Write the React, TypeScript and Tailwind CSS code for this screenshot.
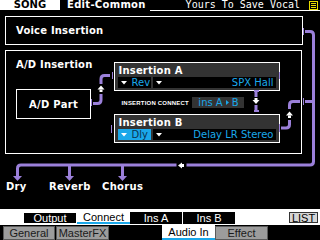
import React from 'react';

const PURPLE = '#9b80da';

const DropArrow = ({ color = '#ffffff' }: { color?: string }) => (
  <svg width="6" height="4" viewBox="0 0 6 4" className="shrink-0">
    <polygon points="0,0 6,0 3,3.5" fill={color} />
  </svg>
);

const InsertionBox = ({
  title,
  type,
  effect,
  selected,
}: {
  title: string;
  type: string;
  effect: string;
  selected?: boolean;
}) => (
  <div className="w-[166px] border border-white bg-[#333333] px-[3px] pt-[2px] pb-[2px]">
    <div className="text-white font-bold text-[10px] leading-[11px] tracking-[0.2px]">{title}</div>
    <div className="flex gap-[2px] mt-[1px] h-[11px]">
      <div
        className={`w-[33px] flex items-center gap-[4px] pl-[3px] text-[10px] leading-[11px] ${
          selected ? 'bg-[#1aa8ea] text-[#0b3350]' : 'bg-black text-[#1aa8ea]'
        }`}
      >
        <DropArrow />
        <span>{type}</span>
      </div>
      <div className="flex-1 flex items-center justify-between pl-[3px] pr-[3px] bg-black text-[#1aa8ea] text-[10px] leading-[11px]">
        <DropArrow />
        <span>{effect}</span>
      </div>
    </div>
  </div>
);

export default function App() {
  return (
    <div className="relative w-[320px] h-[240px] bg-black overflow-hidden font-['DejaVu_Sans',sans-serif] text-white">
      {/* header */}
      <div className="flex h-[11px]">
        <div className="w-[60px] h-[10px] bg-white text-black font-bold text-[10px] leading-[10px] flex items-center justify-center">
          SONG
        </div>
        <div className="w-[90px] pl-[7px] font-bold text-[10px] leading-[10px] tracking-[0.3px]">Edit-Common</div>
        <div className="flex-1 border-b border-white flex items-start justify-end">
          <span className="font-['DejaVu_Sans_Mono',monospace] text-[10px] leading-[10px]">Yours To Save Vocal</span>
          <svg width="9" height="9" viewBox="0 0 9 9" className="ml-[9px] mr-[2px] mt-[1px]">
            <rect x="0.5" y="0.5" width="8" height="8" fill="none" stroke="#e8dc00" />
            <rect x="2" y="2" width="5" height="1" fill="#e8dc00" />
            <rect x="2" y="4" width="5" height="1" fill="#e8dc00" />
            <rect x="2" y="6" width="5" height="1" fill="#e8dc00" />
          </svg>
        </div>
      </div>

      {/* voice insertion */}
      <div className="ml-[5px] mt-[5px] w-[298px] h-[29px] border border-white flex items-center pl-[10px] font-bold text-[10px] tracking-[0.2px]">
        Voice Insertion
      </div>

      {/* A/D insertion */}
      <div className="ml-[5px] mt-[5px] w-[297px] h-[104px] border border-white flex">
        <div className="pl-[10px] pt-[9px]">
          <div className="font-bold text-[10px] leading-[10px] tracking-[0.2px]">A/D Insertion</div>
          <div className="mt-[19px] w-[75px] h-[30px] border border-white flex items-center justify-center font-bold text-[10px] tracking-[0.3px]">
            A/D Part
          </div>
        </div>
        <div className="ml-[22px] pt-[11px]">
          <InsertionBox title="Insertion A" type="Rev" effect="SPX Hall" />
          <div className="flex items-center h-[11px] mt-[6px] mb-[6px]">
            <span className="pl-[7px] w-[78px] shrink-0 whitespace-nowrap font-['Liberation_Sans',sans-serif] font-bold text-[6px] leading-[8px] tracking-[0.2px]">
              INSERTION CONNECT
            </span>
            <div className="w-[52px] h-[11px] bg-[#333333] text-[#1aa8ea] text-[10px] leading-[11px] flex items-center justify-center gap-[3px]">
              <span>ins A</span>
              <svg width="3" height="5" viewBox="0 0 3 5">
                <polygon points="0,0 3,2.5 0,5" fill="#1aa8ea" />
              </svg>
              <span>B</span>
            </div>
          </div>
          <InsertionBox title="Insertion B" type="Dly" effect="Delay LR Stereo" selected />
        </div>
      </div>

      {/* outputs */}
      <div className="flex mt-[27px] h-[12px] font-bold text-[10px] leading-[12px] tracking-[0.3px]">
        <span className="ml-[6px] w-[43px]">Dry</span>
        <span className="w-[53px]">Reverb</span>
        <span>Chorus</span>
      </div>

      {/* tabs row 1 */}
      <div className="mt-[16px] h-[16px] bg-white flex items-start pt-[3px] font-['Liberation_Sans',sans-serif] text-[11px]">
        <div className="ml-[23px] w-[54px] h-[12px] bg-black border border-white text-white flex items-center justify-center leading-[11px]">Output</div>
        <div className="w-[53px] h-[12px] border-b-2 border-[#1aa8ea] text-black flex items-center justify-center leading-[11px]">Connect</div>
        <div className="w-[53px] h-[12px] bg-black border-r border-white text-white flex items-center justify-center leading-[11px]">Ins A</div>
        <div className="w-[52px] h-[12px] bg-black text-white flex items-center justify-center leading-[11px]">Ins B</div>
        <div className="ml-[54px] w-[29px] h-[11px] bg-[#d6d6d6] border border-[#333333] text-black flex items-center justify-center leading-[10px]">LIST</div>
      </div>

      {/* tabs row 2 */}
      <div className="h-[15px] flex items-end font-['Liberation_Sans',sans-serif] text-[11px] leading-[12px]">
        <div className="ml-[3px] w-[52px] h-[14px] bg-[#9c9c9c] border border-[#5a5a5a] text-[#1a1a1a] flex items-center justify-center">General</div>
        <div className="ml-[1px] w-[53px] h-[14px] bg-[#9c9c9c] border border-[#5a5a5a] text-[#1a1a1a] flex items-center justify-center">MasterFX</div>
        <div className="ml-[53px] w-[53px] h-[15px] bg-white border-b-2 border-[#1aa8ea] text-black flex items-center justify-center">Audio In</div>
        <div className="w-[53px] h-[14px] bg-[#9c9c9c] border border-[#5a5a5a] text-[#1a1a1a] flex items-center justify-center">Effect</div>
      </div>

      {/* signal flow lines */}
      <svg className="absolute left-0 top-0 pointer-events-none" width="320" height="240" viewBox="0 0 320 240">
        <g stroke={PURPLE} strokeWidth="3" fill="none">
          <path d="M305 31.5 H310 Q313.5 31.5 313.5 35 V161.5 Q313.5 165 310 165 H186.5" />
          <path d="M176.5 165 H21 Q17.5 165 17.5 168.5 V176" />
          <path d="M69.5 165 V176" />
          <path d="M122.5 165 V176" />
          <path d="M305 101.5 H313" />
          <path d="M300 101.5 H293 Q289.5 101.5 289.5 105 V109" />
          <path d="M289.5 120 V124.5 Q289.5 128 286 128 H281" />
          <path d="M93 103.5 H97.5 Q101 103.5 101 100 V94" />
          <path d="M101 84 V79 Q101 75.5 104.5 75.5 H110" />
          <path d="M256 92 V97" />
          <path d="M256 105 V110" />
        </g>
        <g fill={PURPLE}>
          <rect x="303" y="28" width="1" height="7" />
          <rect x="303" y="98" width="1" height="7" />
          <rect x="279" y="72" width="1" height="7" />
          <rect x="279" y="124" width="1" height="8" />
          <rect x="91" y="99" width="1" height="7" />
          <rect x="112" y="72" width="1" height="7" />
          <rect x="111" y="125" width="1" height="8" />
          <rect x="254" y="90" width="5" height="2" />
          <rect x="254" y="110" width="5" height="2" />
          <polygon points="13,176 22,176 17.5,181" />
          <polygon points="65,176 74,176 69.5,181" />
          <polygon points="118,176 127,176 122.5,181" />
        </g>
        <g fill="#ffffff">
          <polygon points="178,165.5 182,162.5 182,168.5" />
          <rect x="182" y="164" width="2" height="3" />
          <polygon points="289.5,111.5 293,115.5 286,115.5" />
          <rect x="288" y="115.5" width="3" height="2.5" />
          <polygon points="101,85.5 104.5,89.5 97.5,89.5" />
          <rect x="99.5" y="89.5" width="3" height="2.5" />
          <polygon points="256,104 259.5,100 252.5,100" />
          <rect x="254.5" y="98" width="3" height="2" />
        </g>
      </svg>
    </div>
  );
}
